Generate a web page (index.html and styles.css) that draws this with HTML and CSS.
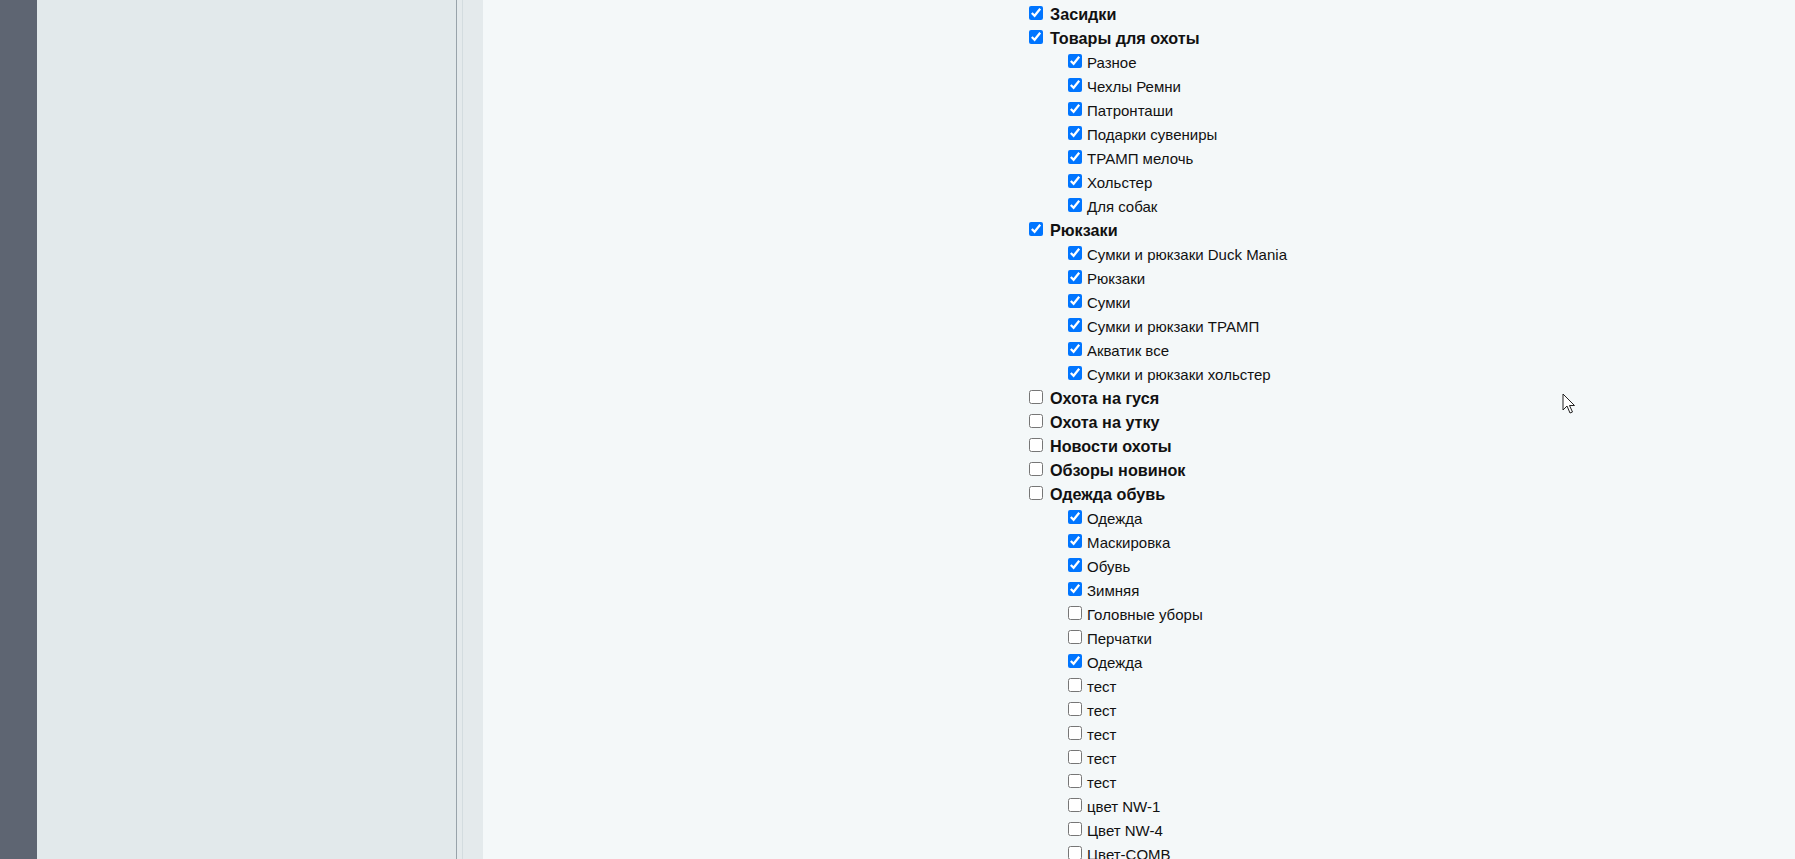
FILE: index.html
```html
<!DOCTYPE html>
<html lang="ru">

<head>
    <meta charset="UTF-8">
    <title>Категории</title>
    <link rel="stylesheet" href="styles.css">
</head>

<body>
    <div class="rail"></div>
    <div class="sidebar"></div>
    <div class="gutter"><div class="gutter-line"></div></div>

    <!-- Category tree -->
    <div class="main-content">
        <ul class="cat-list">
            <li class="cat top"><input type="checkbox" checked><span>Засидки</span></li>
            <li class="cat top"><input type="checkbox" checked><span>Товары для охоты</span></li>
            <li class="cat sub"><input type="checkbox" checked><span>Разное</span></li>
            <li class="cat sub"><input type="checkbox" checked><span>Чехлы Ремни</span></li>
            <li class="cat sub"><input type="checkbox" checked><span>Патронташи</span></li>
            <li class="cat sub"><input type="checkbox" checked><span>Подарки сувениры</span></li>
            <li class="cat sub"><input type="checkbox" checked><span>ТРАМП мелочь</span></li>
            <li class="cat sub"><input type="checkbox" checked><span>Хольстер</span></li>
            <li class="cat sub"><input type="checkbox" checked><span>Для собак</span></li>
            <li class="cat top"><input type="checkbox" checked><span>Рюкзаки</span></li>
            <li class="cat sub"><input type="checkbox" checked><span>Сумки и рюкзаки Duck Mania</span></li>
            <li class="cat sub"><input type="checkbox" checked><span>Рюкзаки</span></li>
            <li class="cat sub"><input type="checkbox" checked><span>Сумки</span></li>
            <li class="cat sub"><input type="checkbox" checked><span>Сумки и рюкзаки ТРАМП</span></li>
            <li class="cat sub"><input type="checkbox" checked><span>Акватик все</span></li>
            <li class="cat sub"><input type="checkbox" checked><span>Сумки и рюкзаки хольстер</span></li>
            <li class="cat top"><input type="checkbox"><span>Охота на гуся</span></li>
            <li class="cat top"><input type="checkbox"><span>Охота на утку</span></li>
            <li class="cat top"><input type="checkbox"><span>Новости охоты</span></li>
            <li class="cat top"><input type="checkbox"><span>Обзоры новинок</span></li>
            <li class="cat top"><input type="checkbox"><span>Одежда обувь</span></li>
            <li class="cat sub"><input type="checkbox" checked><span>Одежда</span></li>
            <li class="cat sub"><input type="checkbox" checked><span>Маскировка</span></li>
            <li class="cat sub"><input type="checkbox" checked><span>Обувь</span></li>
            <li class="cat sub"><input type="checkbox" checked><span>Зимняя</span></li>
            <li class="cat sub"><input type="checkbox"><span>Головные уборы</span></li>
            <li class="cat sub"><input type="checkbox"><span>Перчатки</span></li>
            <li class="cat sub"><input type="checkbox" checked><span>Одежда</span></li>
            <li class="cat sub"><input type="checkbox"><span>тест</span></li>
            <li class="cat sub"><input type="checkbox"><span>тест</span></li>
            <li class="cat sub"><input type="checkbox"><span>тест</span></li>
            <li class="cat sub"><input type="checkbox"><span>тест</span></li>
            <li class="cat sub"><input type="checkbox"><span>тест</span></li>
            <li class="cat sub"><input type="checkbox"><span>цвет NW-1</span></li>
            <li class="cat sub"><input type="checkbox"><span>Цвет NW-4</span></li>
            <li class="cat sub"><input type="checkbox"><span>Цвет-COMB</span></li>
        </ul>
    </div>

    <!-- mouse pointer -->
    <svg class="pointer" width="14" height="22" viewBox="0 0 14 22">
        <path d="M1 1 L1 17 L5 13 L8 20 L10.5 19 L7.5 12.5 L12.5 12.5 Z" fill="#fff" stroke="#222" stroke-width="1"/>
    </svg>
</body>

</html>
```

FILE: styles.css
```css
/* styles.css */
html,
body {
    margin: 0;
    padding: 0;
    height: 100%;
    overflow: hidden;
}

body {
    font-family: "Liberation Sans", Arial, sans-serif;
    display: flex;
    background-color: #f4f8f9;
}

.rail {
    width: 37px;
    flex-shrink: 0;
    background-color: #5e6572;
}

.sidebar {
    width: 419px;
    flex-shrink: 0;
    background-color: #e2e9eb;
    border-right: 1px solid #98a3aa;
}

.gutter {
    width: 26px;
    flex-shrink: 0;
    background-color: #e4eaec;
    padding-left: 5px;
    box-sizing: border-box;
}

.gutter-line {
    width: 1px;
    height: 100%;
    background-color: #d3dcdf;
}

.main-content {
    flex: 1;
    padding-left: 546px;
}

.cat-list {
    list-style: none;
    margin: 0;
    padding: 2px 0 0 0;
}

.cat {
    display: flex;
    align-items: center;
    height: 24px;
    color: #111;
}

.cat input {
    width: 14px;
    height: 14px;
    margin: 0 7px 3px 0;
    accent-color: #0075ff;
}

.top {
    font-weight: bold;
    font-size: 16.2px;
}

.sub {
    padding-left: 39px;
    font-size: 15px;
}

.sub input {
    margin-right: 5px;
}

.pointer {
    position: absolute;
    left: 1562px;
    top: 393px;
}
```
